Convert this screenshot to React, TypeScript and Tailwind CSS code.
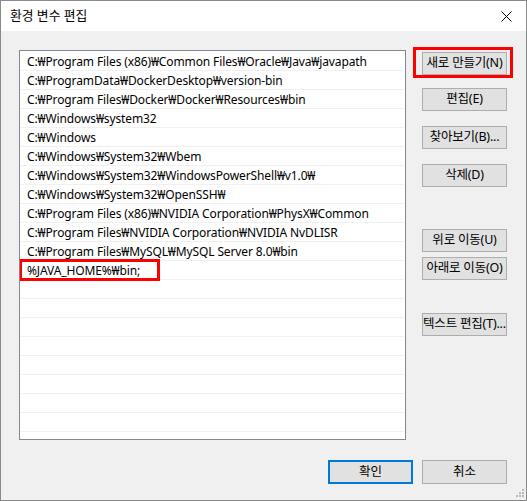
import React from "react";

const paths = [
  "C:₩Program Files (x86)₩Common Files₩Oracle₩Java₩javapath",
  "C:₩ProgramData₩DockerDesktop₩version-bin",
  "C:₩Program Files₩Docker₩Docker₩Resources₩bin",
  "C:₩Windows₩system32",
  "C:₩Windows",
  "C:₩Windows₩System32₩Wbem",
  "C:₩Windows₩System32₩WindowsPowerShell₩v1.0₩",
  "C:₩Windows₩System32₩OpenSSH₩",
  "C:₩Program Files (x86)₩NVIDIA Corporation₩PhysX₩Common",
  "C:₩Program Files₩NVIDIA Corporation₩NVIDIA NvDLISR",
  "C:₩Program Files₩MySQL₩MySQL Server 8.0₩bin",
  "%JAVA_HOME%₩bin;",
];

const font = { fontFamily: '"Noto Sans", "Noto Sans CJK KR", sans-serif' };

function Btn({ label, className = "" }: { label: string; className?: string }) {
  return (
    <div
      className={
        "relative flex h-[23px] w-[85px] items-center justify-center whitespace-nowrap border border-[#adadad] bg-[#e1e1e1] text-[12.5px] tracking-[-0.2px] text-black " +
        className
      }
    >
      {label}
    </div>
  );
}

export default function App() {
  const rows = [...paths, ...Array(8).fill("")];
  return (
    <div
      className="flex h-[501px] w-[527px] flex-col border border-[#8a8a8a] bg-[#f0f0f0] text-black"
      style={font}
    >
      {/* Title bar */}
      <div className="flex h-[30px] items-center justify-between bg-white pl-[9px] pr-[14px]">
        <span className="text-[12.8px]">환경 변수 편집</span>
        <svg width="11" height="11" viewBox="0 0 11 11" className="text-black">
          <path d="M0.5 0.5 L10.5 10.5 M10.5 0.5 L0.5 10.5" stroke="currentColor" strokeWidth="1" />
        </svg>
      </div>

      {/* Body */}
      <div className="flex flex-1 flex-col pl-[18px] pr-[19px] pt-[19px]">
        <div className="flex">
          {/* List */}
          <div className="h-[390px] w-[392px] overflow-hidden border border-[#828790] bg-white p-px">
            {rows.map((p, i) => (
              <div
                key={i}
                className="relative flex h-[19px] items-center whitespace-nowrap border-b border-[#f0f0f0] pl-[6px] pt-px text-[12px] leading-none tracking-[-0.12px]"
              >
                {p}
                {i === 11 && (
                  <div className="pointer-events-none absolute -left-[2px] -top-[2px] h-[22px] w-[141px] border-[3px] border-[#ff0000]" />
                )}
              </div>
            ))}
          </div>

          {/* Buttons */}
          <div className="ml-[16px] flex flex-col pt-[2px]">
            <div className="relative">
              <Btn label="새로 만들기(N)" />
              <div className="pointer-events-none absolute -left-[9px] -top-[5px] h-[31px] w-[100px] border-[3px] border-[#ff0000]" />
            </div>
            <Btn label="편집(E)" className="mt-[13px]" />
            <Btn label="찾아보기(B)..." className="mt-[15px]" />
            <Btn label="삭제(D)" className="mt-[15px]" />
            <Btn label="위로 이동(U)" className="mt-[42px]" />
            <Btn label="아래로 이동(O)" className="mt-[5px]" />
            <Btn label="텍스트 편집(T)..." className="mt-[33px]" />
          </div>
        </div>

        {/* Bottom buttons */}
        <div className="mt-[20px] flex justify-end gap-[9px]">
          <div className="flex h-[24px] w-[85px] items-center justify-center border-2 border-[#0078d7] bg-[#e1e1e1] text-[12.5px]">
            확인
          </div>
          <div className="flex h-[24px] w-[85px] items-center justify-center border border-[#adadad] bg-[#e1e1e1] text-[12.5px]">
            취소
          </div>
        </div>

        <div className="mt-auto flex justify-end pb-[1px]">
          <svg width="10" height="10" viewBox="0 0 10 10" className="-mr-[17px]">
            {[
              [8, 0],
              [5, 3],
              [8, 3],
              [2, 6],
              [5, 6],
              [8, 6],
            ].map(([x, y], i) => (
              <rect key={i} x={x} y={y} width="2" height="2" fill="#b8b8b8" />
            ))}
          </svg>
        </div>
      </div>
    </div>
  );
}
